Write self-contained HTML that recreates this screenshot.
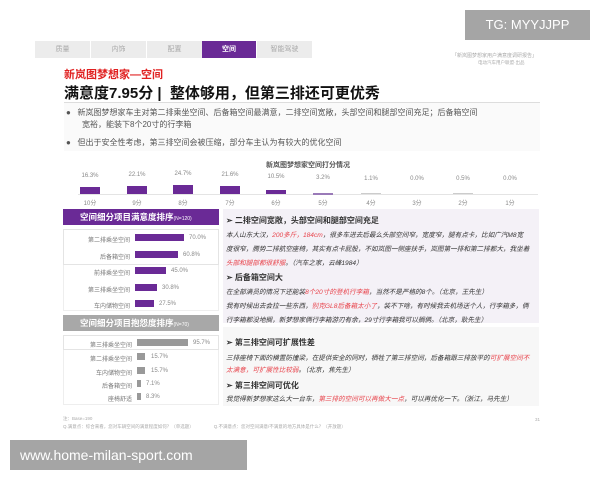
<!DOCTYPE html>
<html><head><meta charset="utf-8"><style>
*{margin:0;padding:0;box-sizing:border-box}
body{width:600px;height:480px;background:#fff;position:relative;overflow:hidden;font-family:"Liberation Sans","Noto Sans CJK SC",sans-serif;color:#333}
.a{position:absolute;white-space:nowrap}
.tab{position:absolute;top:41px;height:17px;background:#ececec;color:#aaa;font-size:7px;text-align:center;line-height:17px}
.bul{font-size:8px;color:#555}
.pct{font-size:6px;color:#888;text-align:center;width:40px}
.lab{font-size:6px;color:#888;text-align:center;width:40px}
.bar{position:absolute;background:#6a2a96}
.rl{font-size:6px;color:#777;text-align:right;width:70px}
.rt{font-size:6.6px;color:#333;font-style:italic}
.rh{font-size:8px;color:#333;font-weight:bold}
.red{color:#e8434b}
</style></head><body>
<div class="a" style="left:465px;top:10px;width:125px;height:30px;background:#a5a5a5;color:#fff;font-size:13px;line-height:30px;text-align:center">TG: MYYJJPP</div>
<div class="tab" style="left:35px;width:55px">质量</div>
<div class="tab" style="left:91px;width:55px">内饰</div>
<div class="tab" style="left:147px;width:55px">配置</div>
<div class="tab" style="left:202px;width:54px;background:#6a2a96;color:#fff;font-weight:bold">空间</div>
<div class="tab" style="left:257px;width:55px">智能驾驶</div>
<div class="a" style="left:452px;top:52px;font-size:5px;color:#aaa">「新岚图梦想家用户满意度调研报告」</div>
<div class="a" style="left:478px;top:60px;font-size:4.5px;color:#aaa">电动汽车用户联盟·出品</div>
<div class="a" style="left:64px;top:66px;font-size:11px;font-weight:bold;color:#e02020">新岚图梦想家—空间</div>
<div class="a" style="left:64px;top:82px;font-size:15px;font-weight:bold;color:#111">满意度7.95分 |&nbsp; 整体够用，但第三排还可更优秀</div>
<div class="a" style="left:64px;top:102px;width:476px;height:1px;background:#ddd"></div>
<div class="a" style="left:64px;top:103px;width:476px;height:48px;background:#fafafa"></div>
<div class="a bul" style="left:66px;top:107px">●&nbsp;&nbsp; 新岚图梦想家车主对第二排乘坐空间、后备箱空间最满意，二排空间宽敞，头部空间和腿部空间充足；后备箱空间</div>
<div class="a bul" style="left:82px;top:119px">宽裕，能装下8个20寸的行李箱</div>
<div class="a bul" style="left:66px;top:137px">●&nbsp;&nbsp; 但出于安全性考虑，第三排空间会被压缩，部分车主认为有较大的优化空间</div>
<div class="a" style="left:266px;top:160px;font-size:7px;color:#555;font-weight:bold">新岚图梦想家空间打分情况</div>
<div class="a" style="left:78px;top:194px;width:460px;height:1px;background:#e4e4e4"></div>
<div class="a pct" style="left:70px;top:173px">16.3%</div><div class="bar" style="left:80px;top:187px;width:20px;height:7px"></div><div class="a lab" style="left:70px;top:198px">10分</div>
<div class="a pct" style="left:117px;top:172px">22.1%</div><div class="bar" style="left:127px;top:186px;width:20px;height:8px"></div><div class="a lab" style="left:117px;top:198px">9分</div>
<div class="a pct" style="left:163px;top:171px">24.7%</div><div class="bar" style="left:173px;top:185px;width:20px;height:9px"></div><div class="a lab" style="left:163px;top:198px">8分</div>
<div class="a pct" style="left:210px;top:172px">21.6%</div><div class="bar" style="left:220px;top:186px;width:20px;height:8px"></div><div class="a lab" style="left:210px;top:198px">7分</div>
<div class="a pct" style="left:256px;top:174px">10.5%</div><div class="bar" style="left:266px;top:190px;width:20px;height:4px"></div><div class="a lab" style="left:256px;top:198px">6分</div>
<div class="a pct" style="left:303px;top:175px">3.2%</div><div class="bar" style="left:313px;top:193px;width:20px;height:1.5px;background:#9a7ab8"></div><div class="a lab" style="left:303px;top:198px">5分</div>
<div class="a pct" style="left:351px;top:176px">1.1%</div><div class="bar" style="left:361px;top:193px;width:20px;height:1px;background:#ccc"></div><div class="a lab" style="left:351px;top:198px">4分</div>
<div class="a pct" style="left:397px;top:176px">0.0%</div><div class="a lab" style="left:397px;top:198px">3分</div>
<div class="a pct" style="left:443px;top:176px">0.5%</div><div class="bar" style="left:453px;top:193px;width:20px;height:1px;background:#ccc"></div><div class="a lab" style="left:443px;top:198px">2分</div>
<div class="a pct" style="left:490px;top:176px">0.0%</div><div class="a lab" style="left:490px;top:198px">1分</div>

<div class="a" style="left:63px;top:209px;width:156px;height:16px;background:#6a2a96;color:#fff;font-size:8.5px;font-weight:bold;line-height:16px;padding-left:17px">空间细分项目满意度排序<span style="font-size:5px;font-weight:normal">(N=120)</span></div>
<div class="a" style="left:63px;top:229px;width:156px;height:36px;border:1px solid #e4e4e4"></div>
<div class="a" style="left:63px;top:265px;width:156px;height:46px;border:1px solid #eee;border-top:none"></div>
<div class="a rl" style="left:60px;top:235px">第二排乘坐空间</div><div class="bar" style="left:135px;top:234px;width:49px;height:7px"></div><div class="a" style="left:189px;top:235px;font-size:6px;color:#888">70.0%</div>
<div class="a rl" style="left:60px;top:252px">后备箱空间</div><div class="bar" style="left:135px;top:251px;width:43px;height:7px"></div><div class="a" style="left:183px;top:252px;font-size:6px;color:#888">60.8%</div>
<div class="a rl" style="left:60px;top:268px">前排乘坐空间</div><div class="bar" style="left:135px;top:267px;width:31px;height:7px"></div><div class="a" style="left:171px;top:268px;font-size:6px;color:#888">45.0%</div>
<div class="a rl" style="left:60px;top:285px">第三排乘坐空间</div><div class="bar" style="left:135px;top:284px;width:22px;height:7px"></div><div class="a" style="left:162px;top:285px;font-size:6px;color:#888">30.8%</div>
<div class="a rl" style="left:60px;top:301px">车内储物空间</div><div class="bar" style="left:135px;top:300px;width:19px;height:7px"></div><div class="a" style="left:159px;top:301px;font-size:6px;color:#888">27.5%</div>

<div class="a" style="left:63px;top:315px;width:156px;height:16px;background:#a8a8a8;color:#fff;font-size:8.5px;font-weight:bold;line-height:16px;padding-left:17px">空间细分项目抱怨度排序<span style="font-size:5px;font-weight:normal">(N=70)</span></div>
<div class="a" style="left:63px;top:335px;width:156px;height:15px;border:1px solid #e4e4e4"></div>
<div class="a" style="left:63px;top:350px;width:156px;height:55px;border:1px solid #eee;border-top:none"></div>
<div class="a rl" style="left:62px;top:340px">第三排乘坐空间</div><div class="bar" style="left:137px;top:339px;width:51px;height:7px;background:#999"></div><div class="a" style="left:193px;top:340px;font-size:6px;color:#888">95.7%</div>
<div class="a rl" style="left:62px;top:354px">第二排乘坐空间</div><div class="bar" style="left:137px;top:353px;width:8px;height:7px;background:#999"></div><div class="a" style="left:151px;top:354px;font-size:6px;color:#888">15.7%</div>
<div class="a rl" style="left:62px;top:368px">车内储物空间</div><div class="bar" style="left:137px;top:367px;width:8px;height:7px;background:#999"></div><div class="a" style="left:151px;top:368px;font-size:6px;color:#888">15.7%</div>
<div class="a rl" style="left:62px;top:381px">后备箱空间</div><div class="bar" style="left:137px;top:380px;width:4px;height:7px;background:#999"></div><div class="a" style="left:146px;top:381px;font-size:6px;color:#888">7.1%</div>
<div class="a rl" style="left:62px;top:394px">座椅舒适</div><div class="bar" style="left:137px;top:393px;width:4px;height:7px;background:#999"></div><div class="a" style="left:146px;top:394px;font-size:6px;color:#888">8.3%</div>

<div class="a" style="left:223px;top:209px;width:316px;height:114px;background:#f4f1f7"></div>
<div class="a" style="left:223px;top:327px;width:316px;height:79px;background:#f7f7f7"></div>
<div class="a rh" style="left:226px;top:215px">➢ 二排空间宽敞，头部空间和腿部空间充足</div>
<div class="a rt" style="left:226px;top:229px">本人山东大汉，<span class="red">200多斤，184cm</span>，很多车进去后最么头部空间窄，宽度窄，腿有点卡，比如广汽M8宽</div>
<div class="a rt" style="left:226px;top:243px">度很窄，腾势二排航空座椅，其实有点卡屁股，不如岚图一侧座扶手，岚图第一排和第二排都大，我坐着</div>
<div class="a rt" style="left:226px;top:257px"><span class="red">头部和腿部都很舒服</span>。（汽车之家，云峰1984）</div>
<div class="a rh" style="left:226px;top:272px">➢ 后备箱空间大</div>
<div class="a rt" style="left:226px;top:286px">在全部满员的情况下还能装<span class="red">8个20寸的登机行李箱</span>，当然不是严格的8个。（北京，王先生）</div>
<div class="a rt" style="left:226px;top:300px">我有时候出去会拉一些东西，<span class="red">别克GL8后备箱太小了</span>，装不下啥，有时候我去机场送个人，行李箱多，俩</div>
<div class="a rt" style="left:226px;top:314px">行李箱都没地搁，新梦想家俩行李箱游刃有余，29寸行李箱我可以搁俩。（北京，耿先生）</div>
<div class="a rh" style="left:226px;top:337px">➢ 第三排空间可扩展性差</div>
<div class="a rt" style="left:226px;top:352px">三排座椅下面的横置防撞梁，在提供安全的同时，牺牲了第三排空间，后备箱跟三排放平的<span class="red">可扩展空间不</span></div>
<div class="a rt" style="left:226px;top:364px"><span class="red">太满意，可扩展性比较弱</span>。（北京，焦先生）</div>
<div class="a rh" style="left:226px;top:380px">➢ 第三排空间可优化</div>
<div class="a rt" style="left:226px;top:393px">我觉得新梦想家这么大一台车，<span class="red">第三排的空间可以再做大一点</span>，可以再优化一下。（浙江，马先生）</div>

<div class="a" style="left:63px;top:416px;font-size:4.5px;color:#aaa">注：Base=190</div>
<div class="a" style="left:63px;top:424px;font-size:4.5px;color:#aaa">Q.满意点：综合来看，您对车辆空间的满意程度如何？（单选题）&nbsp;&nbsp;&nbsp;&nbsp;&nbsp;&nbsp;&nbsp;&nbsp;&nbsp;&nbsp;&nbsp;&nbsp;&nbsp;&nbsp;&nbsp;&nbsp;Q.不满意点：您对空间满意/不满意的地方具体是什么？（开放题）</div>
<div class="a" style="left:535px;top:417px;font-size:4.5px;color:#aaa">31</div>
<div class="a" style="left:10px;top:440px;width:237px;height:30px;background:#a5a5a5;color:#fff;font-size:14px;line-height:30px;padding-left:10px">www.home-milan-sport.com</div>
</body></html>
